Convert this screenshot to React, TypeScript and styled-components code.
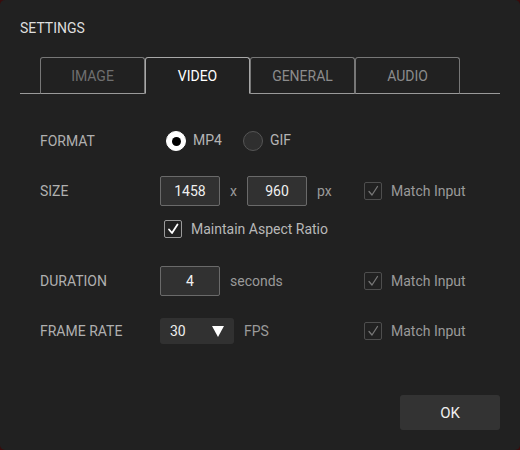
import React from "react";
import styled, { createGlobalStyle } from "styled-components";

const Global = createGlobalStyle`
  html, body { margin: 0; padding: 0; background: #3a0c0c; }
  body { font-family: Roboto, "Liberation Sans", Arial, sans-serif; }
  * { box-sizing: border-box; }
`;

const Panel = styled.div`
  width: 520px;
  height: 450px;
  background: #212121;
  border-radius: 5px;
  padding: 20px;
  display: flex;
  flex-direction: column;
  color: #b4b4b4;
  font-size: 14px;
`;

const Title = styled.div`
  font-size: 14px;
  line-height: 16px;
  color: #dedede;
`;

const TabBar = styled.div`
  margin-top: 21px;
  display: flex;
  align-items: flex-end;
  padding-left: 20px;
  border-bottom: 1px solid #9a9a9a;
  height: 37px;
`;

const Tab = styled.div<{ $active?: boolean; $dim?: boolean }>`
  width: 105px;
  height: 37px;
  margin-bottom: -1px;
  border: 1px solid ${(p) => (p.$active ? "#a8a8a8" : "#777")};
  border-bottom: 1px solid ${(p) => (p.$active ? "#212121" : "#9a9a9a")};
  border-radius: 3px 3px 0 0;
  display: flex;
  align-items: center;
  justify-content: center;
  font-size: 14px;
  color: ${(p) => (p.$active ? "#ffffff" : p.$dim ? "#6f6f6f" : "#8c8c8c")};
`;

const Content = styled.div`
  padding: 32px 0 0 20px;
  display: flex;
  flex-direction: column;
`;

const Row = styled.div<{ $mt?: number; $h?: number }>`
  display: grid;
  grid-template-columns: 120px 204px 1fr;
  align-items: center;
  height: ${(p) => p.$h ?? 30}px;
  margin-top: ${(p) => p.$mt ?? 0}px;
`;

const Label = styled.div`
  color: #b0b0b0;
  font-size: 14px;
`;

const Controls = styled.div<{ $pl?: number }>`
  display: flex;
  align-items: center;
  padding-left: ${(p) => p.$pl ?? 0}px;
`;

const RadioOption = styled.div`
  display: flex;
  align-items: center;
  gap: 7px;
  margin-right: 21px;
  margin-left: 6px;
  & + & { margin-left: 0; }
`;

const RadioCircle = styled.div<{ $on?: boolean }>`
  width: 20px;
  height: 20px;
  border-radius: 50%;
  background: ${(p) => (p.$on ? "#ffffff" : "#2f2f2f")};
  border: 1px solid ${(p) => (p.$on ? "#ffffff" : "#555")};
  display: flex;
  align-items: center;
  justify-content: center;
  &::after {
    content: "";
    display: ${(p) => (p.$on ? "block" : "none")};
    width: 9px;
    height: 9px;
    border-radius: 50%;
    background: #000;
  }
`;

const RadioText = styled.span`
  color: #b4b4b4;
  margin-top: -3px;
`;

const NumBox = styled.div`
  width: 60px;
  height: 30px;
  background: #313131;
  border: 1px solid #6a6a6a;
  border-radius: 2px;
  color: #f0f0f0;
  display: flex;
  align-items: center;
  justify-content: center;
  font-size: 14px;
`;

const Unit = styled.span<{ $mx?: number }>`
  color: #9a9a9a;
  margin-left: 10px;
  margin-right: ${(p) => p.$mx ?? 0}px;
`;

const Check = styled.div`
  display: flex;
  align-items: center;
  gap: 9px;
`;

const Box = styled.div<{ $strong?: boolean }>`
  width: 18px;
  height: 18px;
  border: 1px solid ${(p) => (p.$strong ? "#9a9a9a" : "#4e4e4e")};
  border-radius: 2px;
  display: flex;
  align-items: center;
  justify-content: center;
`;

const CheckText = styled.span<{ $strong?: boolean }>`
  color: ${(p) => (p.$strong ? "#b8b8b8" : "#9a9a9a")};
`;

const Select = styled.div`
  width: 74px;
  height: 26px;
  background: #313131;
  border-radius: 3px;
  display: flex;
  align-items: center;
  justify-content: space-between;
  padding: 0 10px;
  color: #eeeeee;
`;

const Footer = styled.div`
  margin-top: auto;
  display: flex;
  justify-content: flex-end;
`;

const OkButton = styled.div`
  width: 100px;
  height: 35px;
  background: #333333;
  border-radius: 3px;
  color: #f0f0f0;
  font-size: 15px;
  display: flex;
  align-items: center;
  justify-content: center;
`;

const Tick = ({ color, w }: { color: string; w: number }) => (
  <svg width="14" height="14" viewBox="0 0 14 14">
    <polyline
      points="3,7.5 6,11 11.5,2.5"
      fill="none"
      stroke={color}
      strokeWidth={w}
      strokeLinecap="round"
      strokeLinejoin="round"
    />
  </svg>
);

const Triangle = () => (
  <svg width="12" height="11" viewBox="0 0 12 11">
    <polygon points="0,0 12,0 6,11" fill="#ffffff" />
  </svg>
);

const MatchInput = () => (
  <Check>
    <Box>
      <Tick color="#777" w={1.3} />
    </Box>
    <CheckText>Match Input</CheckText>
  </Check>
);

export default function App() {
  return (
    <>
      <Global />
      <Panel>
        <Title>SETTINGS</Title>
        <TabBar>
          <Tab $dim>IMAGE</Tab>
          <Tab $active>VIDEO</Tab>
          <Tab>GENERAL</Tab>
          <Tab>AUDIO</Tab>
        </TabBar>
        <Content>
          <Row>
            <Label>FORMAT</Label>
            <Controls>
              <RadioOption>
                <RadioCircle $on />
                <RadioText>MP4</RadioText>
              </RadioOption>
              <RadioOption>
                <RadioCircle />
                <RadioText>GIF</RadioText>
              </RadioOption>
            </Controls>
          </Row>
          <Row $mt={20}>
            <Label>SIZE</Label>
            <Controls>
              <NumBox>1458</NumBox>
              <Unit $mx={10}>x</Unit>
              <NumBox>960</NumBox>
              <Unit>px</Unit>
            </Controls>
            <MatchInput />
          </Row>
          <Row $mt={8}>
            <span />
            <Controls $pl={4}>
              <Check>
                <Box $strong>
                  <Tick color="#fff" w={1.8} />
                </Box>
                <CheckText $strong>Maintain Aspect Ratio</CheckText>
              </Check>
            </Controls>
          </Row>
          <Row $mt={22}>
            <Label>DURATION</Label>
            <Controls>
              <NumBox>4</NumBox>
              <Unit>seconds</Unit>
            </Controls>
            <MatchInput />
          </Row>
          <Row $mt={20}>
            <Label>FRAME RATE</Label>
            <Controls>
              <Select>
                <span>30</span>
                <Triangle />
              </Select>
              <Unit>FPS</Unit>
            </Controls>
            <MatchInput />
          </Row>
        </Content>
        <Footer>
          <OkButton>OK</OkButton>
        </Footer>
      </Panel>
    </>
  );
}
